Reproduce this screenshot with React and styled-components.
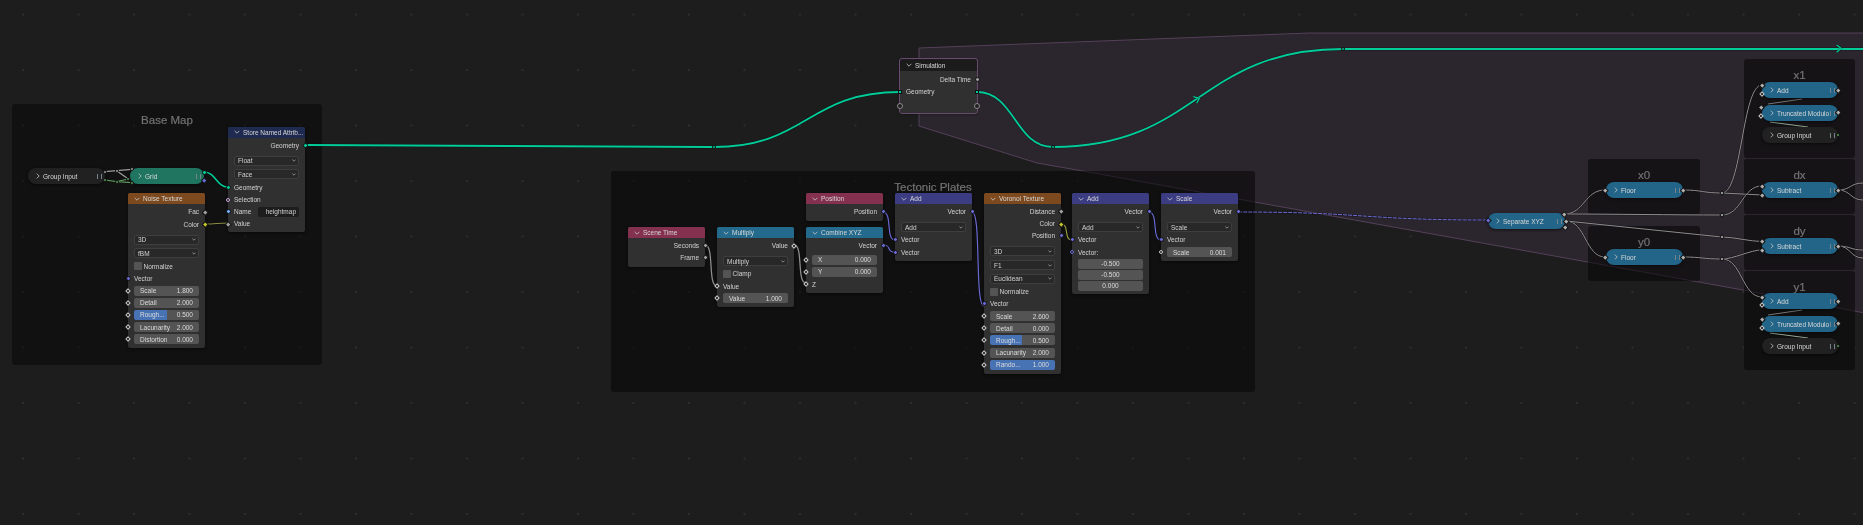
import styled, { createGlobalStyle } from "styled-components"

const GlobalStyle = createGlobalStyle`
  html, body {
    margin: 0;
    background: #1d1d1d;
  }
  * {
    box-sizing: border-box;
  }
`

const Canvas = styled.div`
  position: relative;
  width: 1863px;
  height: 525px;
  overflow: hidden;
  filter: blur(0.35px);
  background-color: #1d1d1d;
  background-image: radial-gradient(circle, #2d2d2d 1px, transparent 1.3px);
  background-size: 55.5px 55.5px;
  background-position: -4.75px -13.25px;
  font-family: "Liberation Sans", "DejaVu Sans", sans-serif;
  font-size: 6.5px;
  color: #d2d2d2;
`
const Layer = styled.svg`
  position: absolute;
  top: 0;
  left: 0;
  pointer-events: none;
`
const Frame = styled.div`
  position: absolute;
  left: ${(p) => p.$x}px;
  top: ${(p) => p.$y}px;
  width: ${(p) => p.$w}px;
  height: ${(p) => p.$h}px;
  padding-top: 9.5px;
  border-radius: 3px;
  background: rgba(5, 5, 5, ${(p) => p.$alpha || 0.55});
  text-align: center;
  font-size: 11.5px;
  line-height: 12px;
  color: #737373;
  -webkit-text-stroke: 0.2px #737373;
`
const NodeBox = styled.div`
  position: absolute;
  left: ${(p) => p.$x}px;
  top: ${(p) => p.$y}px;
  width: ${(p) => p.$w || 77}px;
  background: #303030;
  border-radius: 2px;
  box-shadow: 0 1px 3px rgba(0, 0, 0, 0.5);
  outline: ${(p) => (p.$outline ? `1px solid ${p.$outline}` : "none")};
`
const Header = styled.div`
  display: flex;
  align-items: center;
  gap: 3px;
  height: ${(p) => p.$h || 11}px;
  padding-left: 6px;
  background: ${(p) => p.$color};
  border-radius: 2px 2px 0 0;
  color: #d8d8d8;
  white-space: nowrap;
  overflow: hidden;
`
const Body = styled.div`
  padding: 1.5px 0 ${(p) => p.$pad ?? 3}px;
`
const Row = styled.div`
  position: relative;
  display: flex;
  align-items: center;
  justify-content: ${(p) => (p.$right ? "flex-end" : "flex-start")};
  height: 12.2px;
  padding: 0 6px;
  white-space: nowrap;
`
const Spacer = styled.div`
  height: ${(p) => p.$h}px;
`
const SelectRow = styled.div`
  display: flex;
  align-items: center;
  height: 13.7px;
  padding: 0 6px;
`
const SelectBox = styled.div`
  flex: 1;
  display: flex;
  align-items: center;
  justify-content: space-between;
  height: 10px;
  padding: 0 2px 0 3px;
  background: #282828;
  border: 1px solid #3e3e3e;
  border-radius: 2px;
`
const CheckBox = styled.span`
  width: 8px;
  height: 8px;
  margin-right: 1.5px;
  background: #545454;
  border-radius: 1px;
`
const Field = styled.div`
  flex: 1;
  display: flex;
  align-items: center;
  justify-content: ${(p) => (p.$center ? "center" : "space-between")};
  height: ${(p) => p.$h || 10}px;
  padding: 0 6px;
  background: ${(p) =>
    p.$fill
      ? `linear-gradient(90deg, #4772b3 ${p.$fill}%, #545454 ${p.$fill}%)`
      : "#545454"};
  border-radius: 2px;
  overflow: hidden;
  color: #dcdcdc;
`
const VectorRow = styled(Row)`
  height: 11px;
`
const Pill = styled.div`
  position: absolute;
  left: ${(p) => p.$x}px;
  top: ${(p) => p.$y}px;
  width: ${(p) => p.$w || 76}px;
  height: 16px;
  display: flex;
  align-items: center;
  gap: 3px;
  padding-left: 8px;
  background: ${(p) => p.$color};
  border-radius: 8px;
  box-shadow: 0 1px 3px rgba(0, 0, 0, 0.55);
  color: #d8d8d8;
  white-space: nowrap;
  overflow: hidden;
`
const Bars = styled.span`
  position: absolute;
  right: 3px;
  top: 5.5px;
  width: 5px;
  height: 5px;
  border-left: 1.5px solid #75838b;
  border-right: 1.5px solid #75838b;
`
const Socket = styled.span`
  position: absolute;
  width: ${(p) => p.$size || 5}px;
  height: ${(p) => p.$size || 5}px;
  margin: ${(p) => -(p.$size || 5) / 2}px;
  background: ${(p) => (p.$hollow ? "#1f1f1f" : p.$color)};
  border: ${(p) => (p.$hollow ? `1px solid ${p.$color}` : "0.5px solid #111")};
  border-radius: ${(p) => (p.$shape ? "0.5px" : "50%")};
  transform: ${(p) => (p.$shape === "diamond" ? "rotate(45deg)" : "none")};
`
const RowSocket = styled(Socket)`
  top: 50%;
  ${(p) => (p.$side === "right" ? "right: 0;" : "left: 0;")}
`
const FreeSocket = styled(Socket)`
  left: ${(p) => p.$x}px;
  top: ${(p) => p.$y}px;
`
const NameField = styled.span`
  flex: 1;
  height: 10px;
  margin-left: 7px;
  padding: 0 3px;
  line-height: 10px;
  text-align: right;
  background: #1d1d1d;
  border-radius: 2px;
`

const ChevronDown = () => (
  <svg width="6" height="4" viewBox="0 0 6 4">
    <path d="M0.6 0.8 L3 3.2 L5.4 0.8" fill="none" stroke="#c8c8c8" strokeWidth="0.8" />
  </svg>
)
const ChevronRight = () => (
  <svg width="4" height="6" viewBox="0 0 4 6">
    <path d="M0.8 0.6 L3.2 3 L0.8 5.4" fill="none" stroke="#c8c8c8" strokeWidth="0.8" />
  </svg>
)
const SmallChevron = () => (
  <svg width="4" height="3" viewBox="0 0 4 3">
    <path d="M0.4 0.6 L2 2.2 L3.6 0.6" fill="none" stroke="#b5b5b5" strokeWidth="0.7" />
  </svg>
)

const GEO = "#00cc99"
const VEC = "#6a6ad4"
const GREY = "#a1a1a1"
const YEL = "#c7c729"
const STR = "#70b2ff"
const LILAC = "#cca6d6"

const grey = { $color: GREY, $shape: "diamond", $size: 4.5 }
const ball = { $color: GREY }
const vec = { $color: VEC }
const yellow = { $color: YEL, $shape: "diamond", $size: 4.5 }
const field = { $color: "#d0d0d0", $shape: "diamond", $hollow: true, $size: 4 }
const hollowBall = { $color: "#c4c4c4", $hollow: true, $size: 4 }

const out = (label, s) => ({ kind: "row", label, right: true, s })
const inp = (label, s) => ({ kind: "row", label, s })
const sel = (label) => ({ kind: "select", label })
const chk = (label) => ({ kind: "check", label })
const fld = (label, value, s, fill) => ({ kind: "field", label, value, s, fill })
const vct = (value) => ({ kind: "vector", value })
const gap = (h) => ({ kind: "gap", h })
const named = (label, value, s) => ({ kind: "named", label, value, s })

const NodeRow = ({ row }) => {
  if (row.kind === "gap") return <Spacer $h={row.h} />
  if (row.kind === "select")
    return (
      <SelectRow>
        <SelectBox>
          {row.label}
          <SmallChevron />
        </SelectBox>
      </SelectRow>
    )
  if (row.kind === "check")
    return (
      <Row>
        <CheckBox />
        {row.label}
      </Row>
    )
  if (row.kind === "vector")
    return (
      <VectorRow>
        <Field $center $h={10.5}>
          {row.value}
        </Field>
      </VectorRow>
    )
  if (row.kind === "field")
    return (
      <Row>
        <RowSocket {...row.s} />
        <Field $fill={row.fill}>
          <span>{row.label}</span>
          <span>{row.value}</span>
        </Field>
      </Row>
    )
  if (row.kind === "named")
    return (
      <Row>
        <RowSocket {...row.s} />
        {row.label}
        <NameField>{row.value}</NameField>
      </Row>
    )
  return (
    <Row $right={row.right}>
      {row.s && <RowSocket {...row.s} $side={row.right ? "right" : "left"} />}
      {row.label}
    </Row>
  )
}

const Node = ({ x, y, w, color, title, rows, pad, headerH, outline }) => (
  <NodeBox $x={x} $y={y} $w={w} $outline={outline}>
    <Header $color={color} $h={headerH}>
      <ChevronDown />
      {title}
    </Header>
    <Body $pad={pad}>
      {rows.map((row, i) => (
        <NodeRow key={i} row={row} />
      ))}
    </Body>
  </NodeBox>
)

const Collapsed = ({ x, y, w, color, title }) => (
  <Pill $x={x} $y={y} $w={w} $color={color}>
    <ChevronRight />
    {title}
    <Bars />
  </Pill>
)

const ORANGE = "#7c4a1e"
const CRIMSON = "#83314e"
const TEAL = "#246a8c"
const INDIGO = "#3c3c83"
const PILL_BLUE = "#226588"

const NODES = [
  {
    x: 228, y: 126.7, color: "#1e2a50", title: "Store Named Attrib...", pad: 2,
    rows: [
      out("Geometry", { $color: GEO }),
      gap(2.5),
      sel("Float"),
      sel("Face"),
      inp("Geometry", { $color: GEO }),
      inp("Selection", { $color: LILAC, $hollow: true, $size: 4 }),
      named("Name", "heightmap", { $color: STR }),
      inp("Value", grey),
    ],
  },
  {
    x: 128, y: 193.3, color: ORANGE, title: "Noise Texture",
    rows: [
      out("Fac", grey),
      out("Color", yellow),
      gap(2.5),
      sel("3D"),
      sel("fBM"),
      chk("Normalize"),
      inp("Vector", vec),
      fld("Scale", "1.800", field),
      fld("Detail", "2.000", field),
      fld("Rough...", "0.500", field, 50),
      fld("Lacunarity", "2.000", field),
      fld("Distortion", "0.000", field),
    ],
  },
  {
    x: 628, y: 227, color: CRIMSON, title: "Scene Time",
    rows: [out("Seconds", ball), out("Frame", ball)],
  },
  {
    x: 717, y: 227, color: TEAL, title: "Multiply",
    rows: [
      out("Value", field),
      gap(2.5),
      sel("Multiply"),
      chk("Clamp"),
      inp("Value", field),
      fld("Value", "1.000", field),
    ],
  },
  {
    x: 806, y: 193, color: CRIMSON, title: "Position",
    rows: [out("Position", vec)],
  },
  {
    x: 806, y: 227, color: TEAL, title: "Combine XYZ",
    rows: [
      out("Vector", vec),
      gap(2),
      fld("X", "0.000", field),
      fld("Y", "0.000", field),
      inp("Z", field),
    ],
  },
  {
    x: 895, y: 193, color: INDIGO, title: "Add",
    rows: [
      out("Vector", vec),
      gap(2.5),
      sel("Add"),
      inp("Vector", vec),
      inp("Vector", vec),
    ],
  },
  {
    x: 984, y: 193, color: ORANGE, title: "Voronoi Texture",
    rows: [
      out("Distance", grey),
      out("Color", yellow),
      out("Position", vec),
      gap(2.5),
      sel("3D"),
      sel("F1"),
      sel("Euclidean"),
      chk("Normalize"),
      inp("Vector", vec),
      fld("Scale", "2.600", field),
      fld("Detail", "0.000", field),
      fld("Rough...", "0.500", field, 50),
      fld("Lacunarity", "2.000", field),
      fld("Rando...", "1.000", field, 100),
    ],
  },
  {
    x: 1072, y: 193, color: INDIGO, title: "Add",
    rows: [
      out("Vector", vec),
      gap(2.5),
      sel("Add"),
      inp("Vector", vec),
      inp("Vector:", { $color: VEC, $hollow: true, $size: 4 }),
      vct("-0.500"),
      vct("-0.500"),
      vct("0.000"),
    ],
  },
  {
    x: 1161, y: 193, color: INDIGO, title: "Scale",
    rows: [
      out("Vector", vec),
      gap(2.5),
      sel("Scale"),
      inp("Vector", vec),
      fld("Scale", "0.001", hollowBall),
    ],
  },
  {
    x: 900, y: 59, color: "#1b1b1b", title: "Simulation", headerH: 12, outline: "#6b4a72", pad: 15.5,
    rows: [gap(0.5), out("Delta Time", ball), inp("Geometry")],
  },
]

const PILLS = [
  { x: 28, y: 168, w: 77, color: "#212121", title: "Group Input" },
  { x: 130, y: 168, w: 74, color: "#1f7560", title: "Grid" },
  { x: 1488, y: 213, w: 77, color: PILL_BLUE, title: "Separate XYZ" },
  { x: 1606, y: 182, w: 77, color: PILL_BLUE, title: "Floor" },
  { x: 1606, y: 249, w: 77, color: PILL_BLUE, title: "Floor" },
  { x: 1762, y: 82, w: 76, color: PILL_BLUE, title: "Add" },
  { x: 1762, y: 105, w: 76, color: PILL_BLUE, title: "Truncated Modulo" },
  { x: 1762, y: 127, w: 76, color: "#212121", title: "Group Input" },
  { x: 1762, y: 182, w: 76, color: PILL_BLUE, title: "Subtract" },
  { x: 1762, y: 238, w: 76, color: PILL_BLUE, title: "Subtract" },
  { x: 1762, y: 293, w: 76, color: PILL_BLUE, title: "Add" },
  { x: 1762, y: 316, w: 76, color: PILL_BLUE, title: "Truncated Modulo" },
  { x: 1762, y: 338, w: 76, color: "#212121", title: "Group Input" },
]

const FRAMES = [
  { x: 12, y: 104, w: 310, h: 261, title: "Base Map", alpha: 0.45 },
  { x: 611, y: 171, w: 644, h: 221, title: "Tectonic Plates" },
  { x: 1588, y: 159, w: 112, h: 55, title: "x0" },
  { x: 1588, y: 226, w: 112, h: 55, title: "y0" },
  { x: 1744, y: 59, w: 111, h: 99, title: "x1" },
  { x: 1744, y: 159, w: 111, h: 55, title: "dx" },
  { x: 1744, y: 215, w: 111, h: 55, title: "dy" },
  { x: 1744, y: 271, w: 111, h: 99, title: "y1" },
]

// node-editor style link between two sockets
const curve = (x0, y0, x1, y1, k = 0.5) => {
  const d = Math.abs(x1 - x0) * k
  return `M${x0} ${y0} C${x0 + d} ${y0} ${x1 - d} ${y1} ${x1} ${y1}`
}

const WIRE = "#8e8e8e"

const LINKS = [
  // green geometry line
  { d: curve(305, 145, 714, 147), color: GEO, width: 1.8 },
  { d: curve(714, 147, 900, 92), color: GEO, width: 1.8 },
  { d: curve(977, 92, 1053, 147), color: GEO, width: 1.8 },
  { d: curve(1053, 147, 1343, 49), color: GEO, width: 1.8 },
  { d: "M1343 49 L1863 49", color: GEO, width: 1.8 },
  { d: "M1193.3 96.7 L1199.3 98.3 L1196.7 103.3", color: GEO, width: 1.3 },
  { d: "M1836.7 45 L1841 48.3 L1836.7 52.3", color: GEO, width: 1.3 },
  // base map
  { d: "M105 171.7 L116.7 170.7 L131.7 169.3", color: "#a0a0a0", width: 1.2 },
  { d: "M116.7 170.7 L128.3 179", color: "#a0a0a0", width: 1.2 },
  { d: "M105 180 L116.7 181.7 L131.7 182.7", color: "#5f9a5f", width: 1.2 },
  { d: "M116.7 181.7 L128.3 179", color: "#5f9a5f", width: 1.2 },
  { d: curve(204, 172, 228, 187), color: GEO, width: 1.6 },
  { d: curve(205, 224, 228, 223), color: "#8c8c45", width: 1.2 },
  // tectonic plates
  { d: curve(705, 245, 717, 286, 0.8), color: WIRE, width: 1.3 },
  { d: curve(794, 245, 806, 283, 0.8), color: WIRE, width: 1.3 },
  { d: curve(883, 212, 895, 240, 0.8), color: VEC, width: 1.2 },
  { d: curve(883, 245, 895, 252, 0.8), color: VEC, width: 1.2 },
  { d: curve(972, 212, 984, 306, 0.8), color: VEC, width: 1.2 },
  { d: curve(1061, 224, 1072, 240, 0.8), color: "#9a9a40", width: 1.2 },
  { d: curve(1149, 212, 1161, 240, 0.8), color: VEC, width: 1.2 },
  { d: curve(1238, 212, 1488, 220), color: VEC, width: 1, dash: "4 1" },
  // noise cell wires
  { d: curve(1564, 214, 1605, 190), color: WIRE, width: 1 },
  { d: curve(1566, 221, 1605, 257), color: WIRE, width: 1 },
  { d: curve(1564, 214, 1722, 215, 0.3), color: WIRE, width: 1 },
  { d: "M1566 221 L1722 237", color: WIRE, width: 1 },
  { d: curve(1683, 190, 1722, 193), color: WIRE, width: 1 },
  { d: curve(1683, 257, 1722, 259), color: WIRE, width: 1 },
  { d: curve(1722, 193, 1762, 85), color: WIRE, width: 1 },
  { d: "M1722 193 L1762 195", color: WIRE, width: 1 },
  { d: curve(1722, 215, 1762, 186), color: WIRE, width: 1 },
  { d: curve(1722, 237, 1762, 241.5, 0.3), color: WIRE, width: 1 },
  { d: curve(1722, 259, 1762, 250, 0.3), color: WIRE, width: 1 },
  { d: curve(1722, 259, 1762, 297), color: WIRE, width: 1 },
  { d: curve(1838, 190, 1863, 183), color: WIRE, width: 1 },
  { d: curve(1838, 190, 1863, 200), color: WIRE, width: 1 },
  { d: curve(1838, 246, 1863, 250), color: WIRE, width: 1 },
  { d: curve(1838, 246, 1863, 258), color: WIRE, width: 1 },
  // stubs that run behind the collapsed nodes
  { d: "M1768 104 L1802 99", color: "#7a7a7a", width: 1 },
  { d: "M1770 122 L1808 127", color: "#98ac98", width: 1 },
  { d: "M1768 315 L1802 310", color: "#7a7a7a", width: 1 },
  { d: "M1770 333 L1808 338", color: "#98ac98", width: 1 },
]

const solid = { $color: "#b0b0b0", $shape: "diamond", $size: 4.5 }
const hollow = { $color: "#d0d0d0", $shape: "diamond", $hollow: true, $size: 4 }
const reroute = { $color: "#a8a8a8", $shape: "diamond", $size: 4 }

const FREE_SOCKETS = [
  // base map
  { x: 105, y: 171.7, $color: "#a8a8a8", $size: 4 },
  { x: 105, y: 180, $color: "#5f9a5f", $size: 4 },
  { x: 116.7, y: 170.7, $color: "#a8a8a8", $size: 4 },
  { x: 116.7, y: 181.7, $color: "#5f9a5f", $size: 4 },
  { x: 131.7, y: 169.3, $color: "#a8a8a8", $size: 4 },
  { x: 128.3, y: 179, $color: "#5f9a5f", $size: 4 },
  { x: 131.7, y: 182.7, $color: "#5f9a5f", $size: 4 },
  { x: 204.3, y: 172, $color: GEO },
  { x: 204.3, y: 180.6, $color: VEC, $shape: "diamond", $size: 4.5 },
  // geometry line
  { x: 714, y: 147, $color: GEO, $size: 4 },
  { x: 1053, y: 147, $color: GEO, $size: 4 },
  { x: 1343, y: 49, $color: GEO, $size: 4 },
  // simulation
  { x: 900, y: 92, $color: GEO, $shape: "square", $size: 4 },
  { x: 977, y: 92, $color: GEO, $shape: "square", $size: 4 },
  { x: 900, y: 106, $color: "#8a8a8a", $hollow: true, $size: 6 },
  { x: 977, y: 106, $color: "#8a8a8a", $hollow: true, $size: 6 },
  // collapsed math nodes
  { x: 1488, y: 220, $color: VEC, $shape: "diamond", $size: 4.5 },
  { x: 1564, y: 214, ...solid },
  { x: 1566, y: 221, ...solid },
  { x: 1565, y: 227, ...solid },
  { x: 1605, y: 190, ...solid },
  { x: 1683, y: 190, ...solid },
  { x: 1605, y: 257, ...solid },
  { x: 1683, y: 257, ...solid },
  { x: 1722, y: 193, ...reroute },
  { x: 1722, y: 215, ...reroute },
  { x: 1722, y: 237, ...reroute },
  { x: 1722, y: 259, ...reroute },
  { x: 1762, y: 85, ...solid },
  { x: 1762, y: 94, ...hollow },
  { x: 1838, y: 90, ...solid },
  { x: 1761, y: 107, ...solid },
  { x: 1761, y: 116, ...hollow },
  { x: 1838, y: 112, ...solid },
  { x: 1838, y: 135, $color: "#5aa05a", $size: 4.5 },
  { x: 1762, y: 186, ...solid },
  { x: 1762, y: 195, ...solid },
  { x: 1838, y: 190, ...solid },
  { x: 1762, y: 241.5, ...solid },
  { x: 1762, y: 250, ...solid },
  { x: 1838, y: 246, ...solid },
  { x: 1762, y: 297, ...solid },
  { x: 1762, y: 305, ...hollow },
  { x: 1838, y: 301, ...solid },
  { x: 1762, y: 319, ...solid },
  { x: 1762, y: 328, ...hollow },
  { x: 1838, y: 323, ...solid },
  { x: 1838, y: 346, $color: "#5aa05a", $size: 4.5 },
]

const App = () => (
  <>
    <GlobalStyle />
    <Canvas>
      <Layer width="1863" height="525">
        <polygon
          points="919,48 1310,33 1870,33 1870,314 1743,290 1460,239 1077,170 1037,163 919,126"
          fill="#2b252d"
          stroke="#55405a"
          strokeWidth="1"
        />
      </Layer>
      {FRAMES.map((f) => (
        <Frame key={f.title} $x={f.x} $y={f.y} $w={f.w} $h={f.h} $alpha={f.alpha}>
          {f.title}
        </Frame>
      ))}
      <Layer width="1863" height="525">
        {LINKS.map((l, i) => (
          <g key={i} fill="none">
            <path d={l.d} stroke="rgba(0,0,0,0.35)" strokeWidth={l.width + 1} />
            <path d={l.d} stroke={l.color} strokeWidth={l.width} strokeDasharray={l.dash} />
          </g>
        ))}
      </Layer>
      {NODES.map((n, i) => (
        <Node key={i} {...n} />
      ))}
      {PILLS.map((p, i) => (
        <Collapsed key={i} {...p} />
      ))}
      {FREE_SOCKETS.map(({ x, y, ...s }, i) => (
        <FreeSocket key={i} $x={x} $y={y} {...s} />
      ))}
    </Canvas>
  </>
)

export default App
